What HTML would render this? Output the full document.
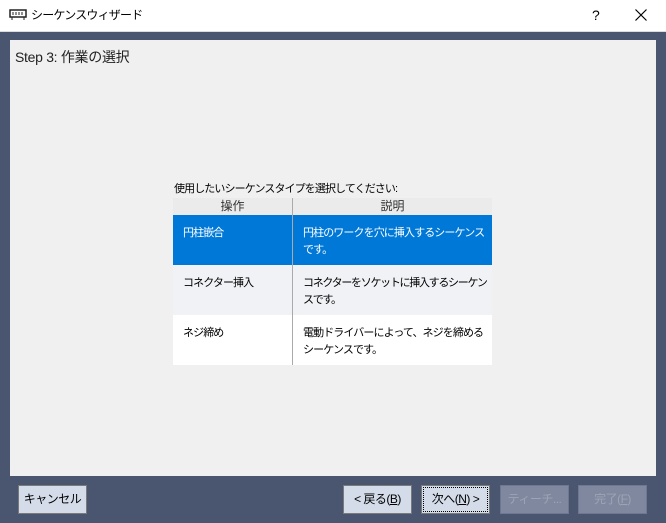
<!DOCTYPE html><html><head><meta charset="utf-8"><style>
body{margin:0;width:666px;height:523px;position:relative;overflow:hidden;background:#4a5570;font-family:"Liberation Sans","Noto Sans CJK JP",sans-serif;}
.t{position:absolute;left:0;top:0;width:666px;height:31px;background:#fff;border-bottom:1px solid #ddd}
.a{position:absolute}
.p{position:absolute;left:10px;top:40px;width:646px;height:436px;background:#f0f0f0}
.b{position:absolute;top:485px;height:27px;width:67px;border:1px solid #7a7a7a;background:#d4dcea;font-size:12px;line-height:27px;text-align:center;color:#000;letter-spacing:-0.5px}
.d{background:#7f889e;border-color:#6f7890;color:#9ca4b6}
.c{font-size:11px;line-height:17px;white-space:nowrap;letter-spacing:-0.9px}
</style></head><body>
<div class="t">
<svg class="a" style="left:9px;top:9px" width="18" height="12"><rect x="1" y="1" width="16" height="7" fill="none" stroke="#222" stroke-width="1.5"/><path d="M4 3v3M7 3v3M10 3v3M13 3v3M3 8v3M15 8v3" stroke="#222"/></svg>
<div class="a c" style="left:31px;top:7px;font-size:12px;letter-spacing:-0.8px">シーケンスウィザード</div>
<div class="a" style="left:592px;top:7px;font-size:14px">?</div>
<svg class="a" style="left:635px;top:9px" width="12" height="12"><path d="M0.5 0.5L11.5 11.5M11.5 0.5L0.5 11.5" stroke="#000" stroke-width="1.2"/></svg>
</div>
<div class="p">
<div class="a" style="left:5px;top:7px;font-size:14px;color:#222;letter-spacing:-0.3px">Step 3: 作業の選択</div>
<div class="a c" style="left:164px;top:141px">使用したいシーケンスタイプを選択してください:</div>
<div class="a" style="left:163px;top:158px;width:319px;height:167px;background:#fff;overflow:hidden">
<div class="a" style="left:0;top:0;width:319px;height:17px;background:#ebebeb;border-bottom:1px solid #ccc"></div>
<div class="a" style="left:0;top:0;width:119px;font-size:12px;text-align:center;line-height:17px;color:#333">操作</div>
<div class="a" style="left:120px;top:0;width:199px;font-size:12px;text-align:center;line-height:17px;color:#333">説明</div>
<div class="a" style="left:0;top:17px;width:319px;height:50px;background:#0078d7"></div>
<div class="a" style="left:0;top:67px;width:319px;height:50px;background:#f0f2f5"></div>
<div class="a" style="left:119px;top:0;width:1px;height:167px;background:#aaa"></div>
<div class="a c" style="left:10px;top:27px;color:#fff">円柱嵌合</div>
<div class="a c" style="left:130px;top:27px;color:#fff">円柱のワークを穴に挿入するシーケンス<br>です。</div>
<div class="a c" style="left:10px;top:77px">コネクター挿入</div>
<div class="a c" style="left:130px;top:77px;letter-spacing:-1.3px">コネクターをソケットに挿入するシーケン<br>スです。</div>
<div class="a c" style="left:10px;top:127px">ネジ締め</div>
<div class="a c" style="left:130px;top:127px">電動ドライバーによって、ネジを締める<br>シーケンスです。</div>
</div>
</div>
<div class="b" style="left:18px">キャンセル</div>
<div class="b" style="left:343px">&lt; 戻る(<u>B</u>)</div>
<div class="b" style="left:421px;outline:1px dotted #000;outline-offset:-3px">次へ(<u>N</u>) &gt;</div>
<div class="b d" style="left:500px">ティーチ...</div>
<div class="b d" style="left:578px">完了(<u>F</u>)</div>
</body></html>
